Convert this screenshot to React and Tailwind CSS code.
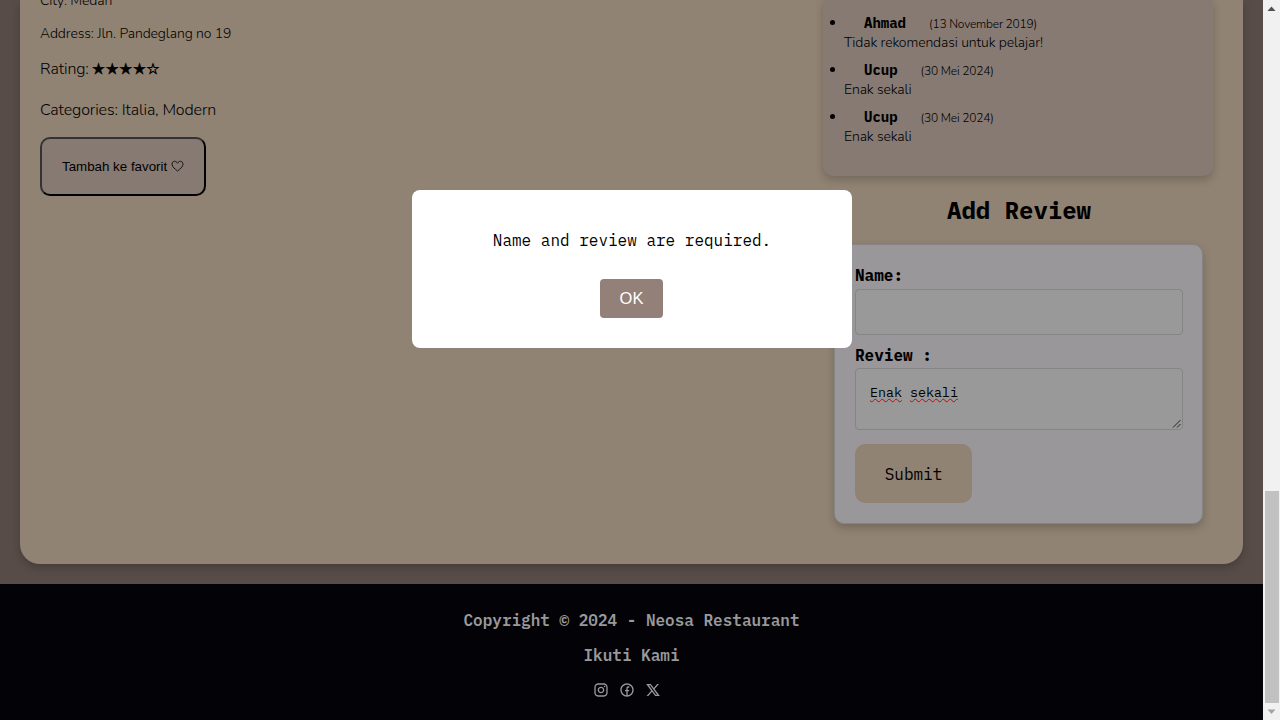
import React from "react";
import { RiInstagramLine, RiFacebookCircleLine, RiTwitterXLine } from "react-icons/ri";

const reviews = [
  { name: "Ahmad", date: "(13 November 2019)", text: "Tidak rekomendasi untuk pelajar!" },
  { name: "Ucup", date: "(30 Mei 2024)", text: "Enak sekali" },
  { name: "Ucup", date: "(30 Mei 2024)", text: "Enak sekali" },
];

function RestaurantInfo() {
  return (
    <div className="-mt-[9px] flex w-[380px] flex-col items-start pl-5 font-['Nunito','Open_Sans',sans-serif] font-light text-black">
      <p className="text-sm leading-5 tracking-[-0.11px]">City: Medan</p>
      <p className="mt-[13px] text-sm leading-5 tracking-[-0.11px]">Address: Jln. Pandeglang no 19</p>
      <p className="mt-[15px] flex text-base leading-5 tracking-[-0.12px]">
        Rating:
        <span className="ml-[3px] font-['DejaVu_Sans',sans-serif] text-[15px] font-bold leading-5 tracking-[0.2px] [-webkit-text-stroke:0.5px_black]">★★★★☆</span>
      </p>
      <p className="mt-[21px] text-base leading-5 tracking-[-0.12px]">Categories: Italia, Modern</p>
      <button className="mt-[17px] flex h-[59px] w-[166px] items-center rounded-[10px] border-2 border-t-[#333] border-r-black border-b-black border-l-[#333] bg-[#877a72] pl-5 font-['Liberation_Sans',sans-serif] text-[13.333px] font-normal">
        Tambah ke favorit
        <svg className="ml-1 -mt-[2px] h-3 w-[13px]" viewBox="0 0 13 12" fill="none" stroke="black" strokeWidth="0.8">
          <path d="M6.500 11C4.300 9.100 1 7 1 4.200 1 2.300 2.200 1.300 3.600 1.300c1.300 0 2.200.7 2.900 2 .7-1.300 1.600-2 2.900-2C10.800 1.300 12 2.300 12 4.200 12 7 8.700 9.100 6.500 11z" />
        </svg>
      </button>
    </div>
  );
}

function ReviewList() {
  return (
    <ul className="h-[176px] w-[390px] rounded-b-[10px] bg-[#877a72] pt-[14px] shadow-[0_4px_8px_rgba(0,0,0,0.2)]">
      {reviews.map((r, i) => (
        <li key={i} className="flex h-[47px]">
          <span className="mt-[6px] ml-[7px] h-[5px] w-[5px] rounded-full bg-black" />
          <div className="ml-[9px]">
            <div className="flex h-5 items-center">
              <span className="-mt-[2px] ml-5 font-['IBM_Plex_Mono','Liberation_Mono',monospace] text-sm font-bold leading-5">{r.name}</span>
              <span className="ml-[23px] font-['Nunito','Open_Sans',sans-serif] text-xs font-light leading-5 tracking-[-0.2px]">{r.date}</span>
            </div>
            <p className="-mt-px font-['Nunito','Open_Sans',sans-serif] text-sm font-light leading-5 tracking-[-0.12px]">{r.text}</p>
          </div>
        </li>
      ))}
    </ul>
  );
}

function ReviewForm() {
  return (
    <form className="ml-[11px] mt-[18px] flex h-[280px] w-[369px] flex-col items-start rounded-[10px] border border-[#858383] bg-[#9a979a] pl-5 pr-[19px] pt-5 font-['IBM_Plex_Mono','Liberation_Mono',monospace] shadow-[0_4px_8px_rgba(0,0,0,0.2)]">
      <label className="text-base font-bold leading-5">Name:</label>
      <div className="mt-1 h-[46px] w-full rounded border border-[#858585] bg-[#999]" />
      <label className="mt-[10px] text-base font-bold leading-5">Review :</label>
      <div className="mt-[3px] flex h-[62px] w-full items-end justify-between rounded border border-[#858585] bg-[#999] pl-[14px]">
        <p className="mb-[27px] text-[13.333px] leading-5">
          <span className="underline decoration-[#b01010] decoration-wavy decoration-[1.2px] underline-offset-1">Enak</span>{" "}
          <span className="underline decoration-[#b01010] decoration-wavy decoration-[1.2px] underline-offset-1">sekali</span>
        </p>
        <svg className="mb-px mr-px h-[9px] w-[9px]" viewBox="0 0 9 9" fill="none" stroke="#222" strokeWidth="1">
          <path d="M1 8.500 8.500 1M5 8.500 8.500 5" />
        </svg>
      </div>
      <button type="button" className="mt-[14px] h-[59px] w-[117px] rounded-[10px] bg-[#908373] text-base">Submit</button>
    </form>
  );
}

function Footer() {
  return (
    <footer className="flex h-[136px] flex-col items-center bg-[#020207] pt-[26px] font-['IBM_Plex_Mono','Liberation_Mono',monospace] text-base font-semibold leading-5 text-[#999]">
      <p>Copyright © 2024 - Neosa Restaurant</p>
      <p className="mt-[15px]">Ikuti Kami</p>
      <div className="mt-[17px] mr-[9px] flex gap-[10px]">
        <RiInstagramLine size={16} />
        <RiFacebookCircleLine size={16} />
        <RiTwitterXLine size={16} />
      </div>
    </footer>
  );
}

function Scrollbar() {
  return (
    <div className="flex h-full w-[17px] flex-col items-center bg-[#f1f1f1]">
      <svg className="h-[17px] w-[17px]" viewBox="0 0 17 17"><path d="M4.500 11h8L8.500 6.500z" fill="#505050" /></svg>
      <div className="mt-[474px] h-[212px] w-[14px] bg-[#c1c1c1]" />
      <svg className="h-[17px] w-[17px]" viewBox="0 0 17 17"><path d="M4.500 6.500h8L8.500 11z" fill="#a3a3a3" /></svg>
    </div>
  );
}

export default function App() {
  return (
    <div className="relative flex h-[720px] w-[1280px] overflow-hidden text-black">
      <div className="flex h-full w-[1263px] flex-col">
        <main className="h-[584px] overflow-hidden bg-[#574c48] px-5">
          <section className="flex h-[564px] w-[1223px] justify-between rounded-b-[20px] bg-[#908373] pr-[30px] shadow-[0_4px_8px_rgba(0,0,0,0.2)]">
            <RestaurantInfo />
            <div className="w-[390px]">
              <ReviewList />
              <h2 className="ml-[2px] mt-[18px] text-center font-['IBM_Plex_Mono','Liberation_Mono',monospace] text-2xl font-bold leading-8">Add Review</h2>
              <ReviewForm />
            </div>
          </section>
        </main>
        <Footer />
      </div>
      <Scrollbar />
      <div role="dialog" className="absolute left-[412px] top-[190px] flex h-[158px] w-[440px] flex-col items-center rounded-lg bg-white pt-10">
        <p className="font-['IBM_Plex_Mono','Liberation_Mono',monospace] text-base leading-5">Name and review are required.</p>
        <button className="mr-px mt-[29px] h-[39px] w-[63px] rounded bg-[#938079] font-['Liberation_Sans',sans-serif] text-[16.5px] text-white">OK</button>
      </div>
    </div>
  );
}
